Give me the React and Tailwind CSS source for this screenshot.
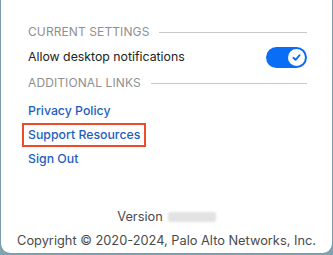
import React from 'react';

const SectionHeader = ({ title }) => (
  <div className="flex items-center gap-[10px] h-[24px]">
    <span className="text-[12px] tracking-[0.1px] text-[#8f8f8f] whitespace-nowrap">{title}</span>
    <div className="flex-1 h-px bg-[#c9c9c9]" />
  </div>
);

const Toggle = () => (
  <div className="w-[41px] h-[21px] rounded-full bg-[#0a6df5] flex items-center justify-end pr-[2px]">
    <div className="w-[17px] h-[17px] rounded-full bg-white flex items-center justify-center">
      <svg width="11" height="11" viewBox="0 0 12 12" fill="none">
        <path d="M2.6 6.3 L5 8.6 L9.4 3.4" stroke="#0a6df5" strokeWidth="2" strokeLinecap="round" strokeLinejoin="round" />
      </svg>
    </div>
  </div>
);

export default function App() {
  return (
    <div className="w-[333px] h-[255px] bg-[#7ea3b3] px-px pb-[2px] font-['Inter',_'Liberation_Sans',_sans-serif]">
      <div className="h-full bg-white rounded-b-[9px] shadow-[0_0_1px_rgba(0,0,0,0.35)] flex flex-col">
        <div className="pl-[27px] pr-[25px] pt-[20px] flex flex-col">
          <SectionHeader title="CURRENT SETTINGS" />
          <div className="flex items-center justify-between h-[28px] -mt-[1px]">
            <span className="text-[12.3px] text-[#222]">Allow desktop notifications</span>
            <Toggle />
          </div>
          <SectionHeader title="ADDITIONAL LINKS" />
          <div className="flex flex-col items-start mt-[4px]">
            <a className="text-[12.3px] text-[#1d5fc1] font-medium h-[24px] flex items-center">Privacy Policy</a>
            <a className="text-[12.3px] text-[#1d5fc1] font-medium h-[24px] flex items-center border-2 border-[#ee4b2b] -mx-[6px] px-[4px]">Support Resources</a>
            <a className="text-[12.3px] text-[#1d5fc1] font-medium h-[24px] flex items-center">Sign Out</a>
          </div>
        </div>
        <div className="mt-auto pb-0 flex flex-col items-center text-[12.8px] text-[#4a4a4a]">
          <div className="flex items-center gap-[5px] h-[24px]">
            <span>Version</span>
            <span className="w-[48px] h-[10px] bg-[#e3e3e3] rounded-[2px] blur-[1px]" />
          </div>
          <div className="h-[24px] flex items-center">Copyright © 2020-2024, Palo Alto Networks, Inc.</div>
        </div>
      </div>
    </div>
  );
}
